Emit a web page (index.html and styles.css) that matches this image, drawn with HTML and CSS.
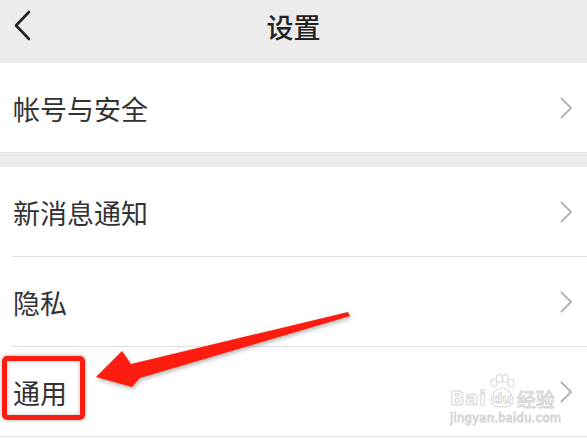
FILE: index.html
```html
<!DOCTYPE html>
<html lang="zh-CN">
<head>
    <meta charset="UTF-8">
    <meta name="viewport" content="width=device-width, initial-scale=1.0">
    <title>设置</title>
    <link rel="stylesheet" href="styles.css">
</head>
<body>
 <div class="screen">
    <header class="topbar">
        <svg class="back" width="20" height="32" viewBox="0 0 20 32">
            <polyline points="15,2 2,15.5 15,29" fill="none" stroke="#222" stroke-width="2.6" stroke-linecap="round" stroke-linejoin="round"/>
        </svg>
        <h1 class="title">设置</h1>
    </header>

    <div class="group">
        <div class="row">
            <span class="label">帐号与安全</span>
            <svg class="chev" width="14" height="24" viewBox="0 0 14 24"><polyline points="2,2 12,12 2,22" fill="none" stroke="#b3b3b3" stroke-width="2"/></svg>
        </div>
    </div>

    <div class="group">
        <div class="row">
            <span class="label">新消息通知</span>
            <svg class="chev" width="14" height="24" viewBox="0 0 14 24"><polyline points="2,2 12,12 2,22" fill="none" stroke="#b3b3b3" stroke-width="2"/></svg>
        </div>
        <div class="row">
            <span class="label">隐私</span>
            <svg class="chev" width="14" height="24" viewBox="0 0 14 24"><polyline points="2,2 12,12 2,22" fill="none" stroke="#b3b3b3" stroke-width="2"/></svg>
        </div>
        <div class="row last">
            <span class="label">通用</span>
            <svg class="chev" width="14" height="24" viewBox="0 0 14 24"><polyline points="2,2 12,12 2,22" fill="none" stroke="#b3b3b3" stroke-width="2"/></svg>
            <span class="highlight"></span>
        </div>
    </div>

    <svg class="arrow" width="587" height="439" viewBox="0 0 587 439">
        <polygon points="96,377 122,351 131,364 348,312 350,316 140,378 132,387" fill="#fe1c10"/>
    </svg>

    <div class="watermark">
        <div class="wm-top">
            <span class="wm-bai">Bai</span>
            <span class="wm-paw">
                <svg width="26" height="34" viewBox="0 0 26 34">
                    <g fill="none" stroke="#dcdcdc" stroke-width="1.2">
                        <ellipse cx="5" cy="9" rx="3" ry="4"/>
                        <ellipse cx="10.5" cy="4.5" rx="3" ry="4"/>
                        <ellipse cx="16.5" cy="4.5" rx="3" ry="4"/>
                        <ellipse cx="22" cy="9" rx="3" ry="4"/>
                        <path d="M13 14 C6 14 2 22 2 27 C2 32 7 33 13 33 C19 33 24 32 24 27 C24 22 20 14 13 14 Z"/>
                    </g>
                </svg>
                <span class="wm-du">du</span>
            </span>
            <span class="wm-jy">经验</span>
        </div>
        <div class="wm-url">jingyan.baidu.com</div>
    </div>
 </div>
</body>
</html>
```

FILE: styles.css
```css
body {
    margin: 0;
    background-color: #fff;
    font-family: "Noto Sans CJK SC", "Noto Sans", sans-serif;
}

.screen {
    position: relative;
    width: 587px;
    height: 439px;
    overflow: hidden;
    background-color: #fff;
}

.topbar {
    height: 63px;
    background-color: #ececec;
    display: flex;
    align-items: center;
    justify-content: center;
    position: relative;
}

.back {
    position: absolute;
    left: 14px;
    top: 10px;
}

.title {
    margin: 0;
    margin-top: -11px;
    font-size: 27px;
    font-weight: 500;
    color: #222;
}

.group {
    background-color: #fff;
    border-bottom: 1px solid #e2e2e2;
}

.group + .group {
    border-top: 14px solid #ececec;
}

.row {
    height: 89px;
    display: flex;
    align-items: center;
    justify-content: space-between;
    padding: 0 14px 0 13px;
    position: relative;
}

.row + .row {
    border-top: 1px solid #e0e0e0;
    margin-left: 12px;
    padding-left: 1px;
}

.label {
    font-size: 27px;
    color: #333;
    margin-top: 1px;
}

.chev {
    margin-top: 0;
}

.highlight {
    position: absolute;
    left: -10px;
    top: 9px;
    width: 73px;
    height: 54px;
    border: 5px solid #fe1c10;
    border-radius: 5px;
    box-shadow: 0 0 4px rgba(0, 0, 0, 0.35), inset 0 0 4px rgba(0, 0, 0, 0.25);
}

.arrow {
    position: absolute;
    left: 0;
    top: 0;
    filter: drop-shadow(1px 2px 2px rgba(0, 0, 0, 0.3));
}

.watermark {
    position: absolute;
    left: 450px;
    top: 372px;
    font-family: "DejaVu Sans", sans-serif;
    color: transparent;
    -webkit-text-stroke: 1px #d6d6d6;
}

.wm-top {
    display: flex;
    align-items: flex-end;
    height: 36px;
}

.wm-bai {
    font-size: 19px;
    font-weight: bold;
    line-height: 1;
    letter-spacing: 1px;
}

.wm-paw {
    position: relative;
    width: 26px;
    height: 34px;
    margin: 0 2px;
}

.wm-paw svg {
    display: block;
}

.wm-du {
    position: absolute;
    left: 4px;
    bottom: 2px;
    font-size: 13px;
    font-weight: bold;
}

.wm-jy {
    font-family: "Noto Sans CJK SC", sans-serif;
    font-size: 19px;
    line-height: 1;
}

.wm-url {
    font-size: 11.5px;
    margin-top: 3px;
    letter-spacing: 0.3px;
}
```
